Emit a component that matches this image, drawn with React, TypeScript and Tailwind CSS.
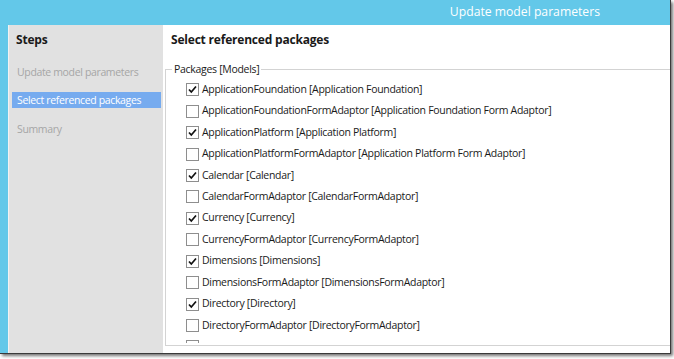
import React from "react";

const items: [string, boolean][] = [
  ["ApplicationFoundation [Application Foundation]", true],
  ["ApplicationFoundationFormAdaptor [Application Foundation Form Adaptor]", false],
  ["ApplicationPlatform [Application Platform]", true],
  ["ApplicationPlatformFormAdaptor [Application Platform Form Adaptor]", false],
  ["Calendar [Calendar]", true],
  ["CalendarFormAdaptor [CalendarFormAdaptor]", false],
  ["Currency [Currency]", true],
  ["CurrencyFormAdaptor [CurrencyFormAdaptor]", false],
  ["Dimensions [Dimensions]", true],
  ["DimensionsFormAdaptor [DimensionsFormAdaptor]", false],
  ["Directory [Directory]", true],
  ["DirectoryFormAdaptor [DirectoryFormAdaptor]", false],
  ["", false],
];

function Check({ checked }: { checked: boolean }) {
  return (
    <div className="w-[13px] h-[13px] border border-[#8e8e8e] bg-white flex items-center justify-center shrink-0">
      {checked && (
        <svg width="11" height="11" viewBox="0 0 11 11">
          <path d="M2 5.5 L4.3 8 L9 2.5" fill="none" stroke="#111" strokeWidth="1.7" />
        </svg>
      )}
    </div>
  );
}

export default function App() {
  return (
    <div className="w-[674px] h-[359px] bg-white overflow-hidden font-['Open_Sans',sans-serif]">
      <div className="w-[671px] h-[354px] flex flex-col bg-[#63c8e9] border-b border-r border-[#3a3a3a] shadow-[2px_2px_3px_rgba(0,0,0,0.55)]">
        <div className="h-[25px] shrink-0 flex items-center justify-end pr-[70px] text-white text-[12.2px] leading-none">
          Update model parameters
        </div>
        <div className="flex-1 flex pl-[8px] min-h-0">
          <div className="w-[155px] bg-[#e1e1e1] border-l border-[#f2f2f2] flex flex-col text-[10.5px] tracking-[-0.35px]">
            <div className="mt-[7px] pl-[7px] h-[16px] leading-[16px] font-bold text-[12px] tracking-[-0.2px] text-[#1a1a1a]">Steps</div>
            <div className="mt-[16px] pl-[8px] h-[16px] leading-[16px] text-[#a6a6a6]">Update model parameters</div>
            <div className="mt-[12px] ml-[3px] mr-[2px] h-[16px] leading-[16px] pl-[5px] bg-[#76abef] text-white">Select referenced packages</div>
            <div className="mt-[13px] pl-[8px] h-[16px] leading-[16px] text-[#a6a6a6]">Summary</div>
          </div>
          <div className="flex-1 bg-white overflow-hidden flex flex-col">
            <div className="mt-[7px] pl-[8px] h-[16px] leading-[16px] font-bold text-[12px] tracking-[-0.2px] text-[#1a1a1a]">Select referenced packages</div>
            <fieldset className="mt-[13px] ml-[2px] w-[520px] border border-[#d3d3d3] p-0 pt-[2px] pb-[2px] text-[10.5px] tracking-[-0.3px] text-[#1a1a1a]">
              <legend className="ml-[6px] px-[2px] h-[16px] leading-[16px]">Packages [Models]</legend>
              <div className="h-[264px] overflow-hidden flex flex-col pl-[20px]">
                {items.map(([label, checked], i) => (
                  <div key={i} className="h-[21.45px] shrink-0 flex items-center gap-[3px]">
                    <Check checked={checked} />
                    {label && <span className="whitespace-nowrap">{label}</span>}
                  </div>
                ))}
              </div>
            </fieldset>
          </div>
        </div>
      </div>
    </div>
  );
}
